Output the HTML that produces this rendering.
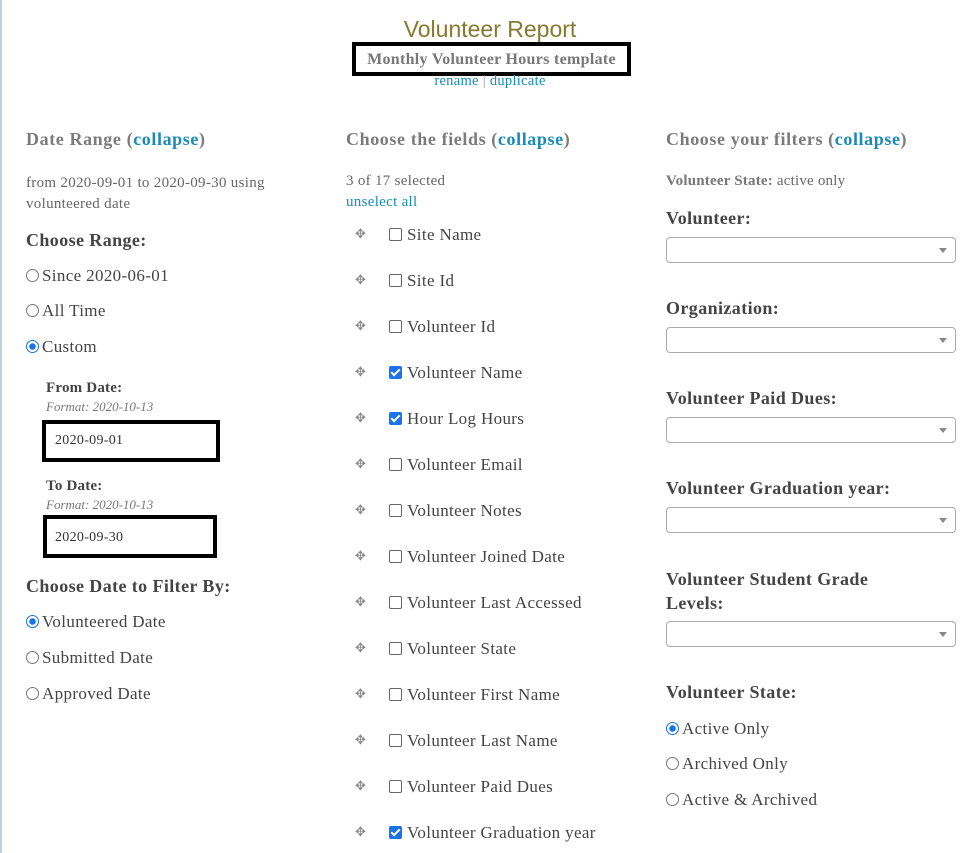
<!DOCTYPE html>
<html><head><meta charset="utf-8"><style>
body{margin:0;width:980px;height:853px;overflow:hidden;background:#fff;font-family:"Liberation Serif",serif;color:#444;position:relative}
.a{position:absolute;white-space:nowrap}
.edge{position:absolute;left:0;top:0;width:2px;height:853px;background:#b9d3de}
.h{font-weight:bold;color:#7b7b7b;font-size:18px;letter-spacing:.6px}
.lk{color:#1a8bbb}
.lb{font-weight:bold;font-size:18px;letter-spacing:.4px;color:#444}
.t{font-size:17px;letter-spacing:.35px;color:#444}
.s{font-size:15px;letter-spacing:.3px;color:#666}
.rd{display:inline-block;width:11px;height:11px;border:1px solid #777;border-radius:50%;vertical-align:-1px;margin-right:3px;box-sizing:content-box}
.rd.on{border-color:#1a73e8;background:radial-gradient(circle,#1a73e8 3px,#fff 3.5px)}
.cb{display:inline-block;width:11px;height:11px;border:1px solid #666;border-radius:2px;vertical-align:-1px;margin-right:5px;position:relative}
.cb.on{background:#1a73e8;border-color:#1a73e8}
.cb.on:after{content:"";position:absolute;left:3px;top:0px;width:3px;height:7px;border:solid #fff;border-width:0 2px 2px 0;transform:rotate(45deg)}
.mv{position:absolute;color:#888;font-size:13px;font-family:"DejaVu Sans",sans-serif}
.sel{position:absolute;left:666px;width:288px;height:24px;border:1px solid #aaa;border-radius:4px;background:#fff}
.sel:after{content:"";position:absolute;right:8px;top:10px;border:4px solid transparent;border-top:5px solid #888}
.box{position:absolute;border:4px solid #000;background:#fff;font-size:14px;letter-spacing:.3px;color:#333;box-sizing:border-box}
</style></head><body>
<div class="edge"></div>
<div class="a" style="left:0;width:980px;text-align:center;top:16px;font-family:'Liberation Sans',sans-serif;font-size:23px;color:#857a2e">Volunteer Report</div>
<div class="a" style="left:352px;top:42px;width:271px;height:26px;border:4px solid #000;text-align:center;font-weight:bold;font-size:16px;letter-spacing:.3px;color:#777;line-height:28px">Monthly Volunteer Hours template</div>
<div class="a lk" style="left:0;width:980px;text-align:center;top:73px;font-size:14.5px;letter-spacing:.3px">rename <span style="color:#999">|</span> duplicate</div>

<div class="a h" style="left:26px;top:129px">Date Range (<span class="lk">collapse</span>)</div>
<div class="a s" style="left:26px;top:173px;line-height:21px">from 2020-09-01 to 2020-09-30 using<br>volunteered date</div>
<div class="a lb" style="left:26px;top:230px">Choose Range:</div>
<div class="a t" style="left:26px;top:266px"><span class="rd"></span>Since 2020-06-01</div>
<div class="a t" style="left:26px;top:301px"><span class="rd"></span>All Time</div>
<div class="a t" style="left:26px;top:337px"><span class="rd on"></span>Custom</div>
<div class="a" style="left:46px;top:380px;font-weight:bold;font-size:15px;letter-spacing:.2px">From Date:</div>
<div class="a" style="left:46px;top:399px;font-style:italic;font-size:13px;color:#777">Format: 2020-10-13</div>
<div class="box" style="left:42px;top:420px;width:178px;height:42px;line-height:34px;padding-left:9px">2020-09-01</div>
<div class="a" style="left:46px;top:478px;font-weight:bold;font-size:15px;letter-spacing:.2px">To Date:</div>
<div class="a" style="left:46px;top:497px;font-style:italic;font-size:13px;color:#777">Format: 2020-10-13</div>
<div class="box" style="left:43px;top:515px;width:174px;height:43px;line-height:37px;padding-left:8px">2020-09-30</div>
<div class="a lb" style="left:26px;top:576px">Choose Date to Filter By:</div>
<div class="a t" style="left:26px;top:612px"><span class="rd on"></span>Volunteered Date</div>
<div class="a t" style="left:26px;top:648px"><span class="rd"></span>Submitted Date</div>
<div class="a t" style="left:26px;top:684px"><span class="rd"></span>Approved Date</div>

<div class="a h" style="left:346px;top:129px">Choose the fields (<span class="lk">collapse</span>)</div>
<div class="a s" style="left:346px;top:173px">3 of 17 selected</div>
<div class="a lk" style="left:346px;top:194px;font-size:15px;letter-spacing:.3px">unselect all</div>
<div id="flds"></div>

<div class="a h" style="left:666px;top:129px">Choose your filters (<span class="lk">collapse</span>)</div>
<div class="a" style="left:666px;top:173px;font-size:15px;letter-spacing:.2px;color:#666"><b style="color:#777">Volunteer State:</b> active only</div>
<div class="a lb" style="left:666px;top:208px">Volunteer:</div>
<div class="sel" style="top:237px"></div>
<div class="a lb" style="left:666px;top:298px">Organization:</div>
<div class="sel" style="top:327px"></div>
<div class="a lb" style="left:666px;top:388px">Volunteer Paid Dues:</div>
<div class="sel" style="top:417px"></div>
<div class="a lb" style="left:666px;top:478px">Volunteer Graduation year:</div>
<div class="sel" style="top:507px"></div>
<div class="a lb" style="left:666px;top:567px;line-height:24px">Volunteer Student Grade<br>Levels:</div>
<div class="sel" style="top:621px"></div>
<div class="a lb" style="left:666px;top:682px">Volunteer State:</div>
<div class="a t" style="left:666px;top:719px"><span class="rd on"></span>Active Only</div>
<div class="a t" style="left:666px;top:754px"><span class="rd"></span>Archived Only</div>
<div class="a t" style="left:666px;top:790px"><span class="rd"></span>Active &amp; Archived</div>

<script>
var f=[["Site Name",0],["Site Id",0],["Volunteer Id",0],["Volunteer Name",1],["Hour Log Hours",1],["Volunteer Email",0],["Volunteer Notes",0],["Volunteer Joined Date",0],["Volunteer Last Accessed",0],["Volunteer State",0],["Volunteer First Name",0],["Volunteer Last Name",0],["Volunteer Paid Dues",0],["Volunteer Graduation year",1]];
var h="";f.forEach(function(x,i){var y=225+i*46;h+='<div class="mv" style="left:355px;top:'+(y+2)+'px">✥</div><div class="a t" style="left:389px;top:'+y+'px"><span class="cb'+(x[1]?' on':'')+'"></span>'+x[0]+'</div>';});
document.getElementById("flds").innerHTML=h;
</script>
</body></html>
